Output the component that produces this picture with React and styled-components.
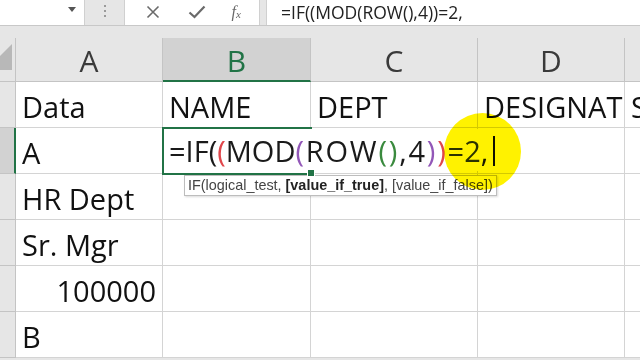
import React from 'react';
import styled, { createGlobalStyle } from 'styled-components';

const GREEN = '#217346';

const GlobalStyle = createGlobalStyle`
  html, body {
    margin: 0;
    padding: 0;
    overflow: hidden;
    background: #e6e6e6;
  }
`;

const rows = [
  ['Data', 'NAME', 'DEPT', 'DESIGNATION', 'SALARY'],
  ['A', null, '', '', ''],
  ['HR Dept', '', '', '', ''],
  ['Sr. Mgr', '', '', '', ''],
  [{ text: '100000', num: true }, '', '', '', ''],
  ['B', '', '', '', ''],
];

const columns = ['A', 'B', 'C', 'D', 'E'];

// text, colour, whether the token sits in the looser "(ROW(),4))" run
const formula = [
  ['=IF(', '#1a1a1a'],
  ['(', '#e0464b'],
  ['MOD', '#1a1a1a'],
  ['(', '#9257b8', true],
  ['ROW', '#1a1a1a', true],
  ['()', '#3a8a3e', true],
  [',4', '#1a1a1a', true],
  [')', '#9257b8', true],
  [')', '#e0464b', true],
  ['=2', '#2b3592'],
  [',', '#1a1a1a'],
];

function App() {
  return (
    <Page>
      <GlobalStyle />
      <FormulaBar>
        <NameBox>
          <DropArrow />
        </NameBox>
        <Grip>
          <Dot />
          <Dot />
          <Dot />
        </Grip>
        <BarButtons>
          <BarIcon>
            <svg width="14" height="14" viewBox="0 0 14 14">
              <path d="M1.5 1.5 L12.5 12.5 M12.5 1.5 L1.5 12.5" stroke="#6a6a6a" strokeWidth="1.6" fill="none" />
            </svg>
          </BarIcon>
          <BarIcon>
            <svg width="18" height="14" viewBox="0 0 18 14">
              <path d="M1.5 7.5 L6.5 12 L16.5 1.5" stroke="#6a6a6a" strokeWidth="2.2" fill="none" />
            </svg>
          </BarIcon>
          <FxIcon>
            f<sub>x</sub>
          </FxIcon>
        </BarButtons>
        <FormulaInput>=IF((MOD(ROW(),4))=2,</FormulaInput>
      </FormulaBar>

      <Sheet>
        <Corner>
          <CornerTriangle />
        </Corner>
        {columns.map((c) => (
          <ColHead key={c} $active={c === 'B'}>
            {c}
          </ColHead>
        ))}

        {rows.map((row, r) => (
          <React.Fragment key={r}>
            <RowHead $active={r === 1} />
            {row.map((cell, c) => {
              if (cell === null) {
                return (
                  <EditCell key={c}>
                    <EditText>
                      {formula.map(([t, col, wide], i) => (
                        <Token key={i} $color={col} $wide={wide}>
                          {t}
                        </Token>
                      ))}
                      <Caret />
                    </EditText>
                    <Tip>
                      IF(logical_test, <b>[value_if_true]</b>, [value_if_false])
                    </Tip>
                    <FillHandle />
                  </EditCell>
                );
              }
              const num = typeof cell === 'object';
              return (
                <Cell key={c} $num={num}>
                  {num ? cell.text : cell}
                </Cell>
              );
            })}
          </React.Fragment>
        ))}
        <Spot />
      </Sheet>
    </Page>
  );
}

const Page = styled.div`
  width: 640px;
  height: 360px;
  overflow: hidden;
  display: flex;
  flex-direction: column;
  background: #e6e6e6;
  font-family: 'Open Sans', 'Noto Sans', sans-serif;
`;

const FormulaBar = styled.div`
  height: 26px;
  flex: none;
  display: flex;
  background: #e6e6e6;
  border-bottom: 1px solid #c8c8c8;
  box-sizing: border-box;
`;

const NameBox = styled.div`
  width: 85px;
  background: #fff;
  border-right: 1px solid #d0d0d0;
  box-sizing: border-box;
  display: flex;
  justify-content: flex-end;
  padding: 7px 8px 0 0;
`;

const DropArrow = styled.div`
  width: 0;
  height: 0;
  border-left: 4.5px solid transparent;
  border-right: 4.5px solid transparent;
  border-top: 5px solid #555;
`;

const Grip = styled.div`
  width: 39px;
  display: flex;
  flex-direction: column;
  align-items: center;
  justify-content: center;
  gap: 3px;
  padding-bottom: 3px;
  box-sizing: border-box;
`;

const Dot = styled.div`
  width: 2px;
  height: 2px;
  background: #9a9a9a;
`;

const BarButtons = styled.div`
  width: 136px;
  background: #fff;
  border-left: 1px solid #d0d0d0;
  border-right: 1px solid #d0d0d0;
  box-sizing: border-box;
  display: flex;
  align-items: center;
  justify-content: space-around;
  padding: 0 6px 2px;
`;

const BarIcon = styled.div`
  display: flex;
  align-items: center;
  justify-content: center;
  width: 20px;
`;

const FxIcon = styled.div`
  font-family: 'Liberation Serif', serif;
  font-style: italic;
  font-size: 16px;
  color: #6a6a6a;
  line-height: 1;
  sub {
    font-size: 11px;
    vertical-align: -1px;
  }
`;

const FormulaInput = styled.div`
  flex: 1;
  margin-left: 6px;
  background: #fff;
  border-left: 1px solid #d0d0d0;
  padding: 0 0 0 14px;
  font-size: 17.5px;
  line-height: 24px;
  color: #222;
  white-space: nowrap;
`;

const Sheet = styled.div`
  position: relative;
  margin-top: 12px;
  display: grid;
  grid-template-columns: 16px 147px 148px 167px 147px 147px;
  grid-template-rows: 44px repeat(6, 46px);
  background: #fff;
`;

const Corner = styled.div`
  background: #e6e6e6;
  border-bottom: 1px solid #c4c4c4;
  border-right: 1px solid #c4c4c4;
  box-sizing: border-box;
  display: flex;
  align-items: flex-end;
  justify-content: flex-end;
  padding: 0 3px 11px 0;
`;

const CornerTriangle = styled.div`
  width: 0;
  height: 0;
  border-left: 26px solid transparent;
  border-bottom: 26px solid #b8b8b8;
`;

const ColHead = styled.div`
  background: ${(p) => (p.$active ? '#d2d2d2' : '#e6e6e6')};
  color: ${(p) => (p.$active ? GREEN : '#3a3a3a')};
  border-right: 1px solid #c4c4c4;
  border-bottom: ${(p) => (p.$active ? `2px solid ${GREEN}` : '1px solid #c4c4c4')};
  box-sizing: border-box;
  font-size: 30px;
  display: flex;
  align-items: center;
  justify-content: center;
  padding-top: 2px;
`;

const RowHead = styled.div`
  background: ${(p) => (p.$active ? '#d2d2d2' : '#e6e6e6')};
  border-bottom: 1px solid #c4c4c4;
  border-right: ${(p) => (p.$active ? `2px solid ${GREEN}` : '1px solid #c4c4c4')};
  box-sizing: border-box;
`;

const Cell = styled.div`
  border-right: 1px solid #d4d4d4;
  border-bottom: 1px solid #d4d4d4;
  box-sizing: border-box;
  overflow: hidden;
  white-space: nowrap;
  font-size: 29px;
  line-height: 40px;
  color: #111;
  display: flex;
  align-items: flex-end;
  justify-content: ${(p) => (p.$num ? 'flex-end' : 'flex-start')};
  padding: 0 6px 0 6px;
`;

const EditCell = styled.div`
  position: relative;
  z-index: 2;
  border-bottom: 1px solid #d4d4d4;
  outline: 2px solid ${GREEN};
  outline-offset: -1px;
  box-sizing: border-box;
`;

const EditText = styled.div`
  position: absolute;
  left: 1px;
  top: 1px;
  bottom: 2px;
  padding: 0 6px 0 5px;
  background: #fff;
  white-space: nowrap;
  font-size: 29px;
  line-height: 40px;
  display: flex;
  align-items: flex-end;
`;

const Token = styled.span`
  color: ${(p) => p.$color};
  letter-spacing: ${(p) => (p.$wide ? '1.8px' : '0')};
`;

const Caret = styled.span`
  display: inline-block;
  width: 1.5px;
  height: 30px;
  background: #111;
  margin: 0 0 5px 5px;
`;

const FillHandle = styled.div`
  position: absolute;
  right: -4px;
  bottom: -4px;
  width: 6px;
  height: 6px;
  background: ${GREEN};
  border: 1px solid #fff;
`;

const Tip = styled.div`
  position: absolute;
  left: 21px;
  top: calc(100% + 2px);
  padding: 0 3px;
  line-height: 19px;
  background: #fff;
  border: 1px solid #bdbdbd;
  box-shadow: 1px 1px 2px rgba(0, 0, 0, 0.15);
  font-family: 'Liberation Sans', sans-serif;
  font-size: 14.4px;
  color: #444;
  white-space: nowrap;
  b {
    color: #222;
  }
`;

const Spot = styled.div`
  position: absolute;
  left: 444px;
  top: 75px;
  width: 77px;
  height: 77px;
  border-radius: 50%;
  background: #fff200;
  mix-blend-mode: multiply;
  z-index: 3;
  pointer-events: none;
`;

export default App;
